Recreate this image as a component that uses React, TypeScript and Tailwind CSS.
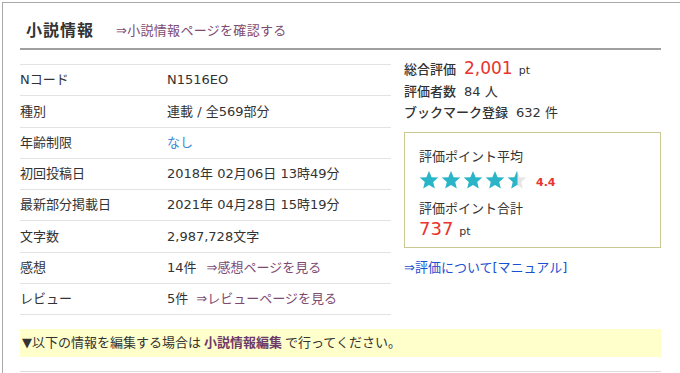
const rows: { label: string; value: React.ReactNode }[] = [
  { label: "Nコード", value: "N1516EO" },
  { label: "種別", value: "連載 / 全569部分" },
  { label: "年齢制限", value: <span className="text-[#3a8ad6]">なし</span> },
  { label: "初回投稿日", value: "2018年 02月06日 13時49分" },
  { label: "最新部分掲載日", value: "2021年 04月28日 15時19分" },
  { label: "文字数", value: "2,987,728文字" },
  {
    label: "感想",
    value: (
      <>
        14件<span className="ml-[10px] text-[#7d4a72]">⇒感想ページを見る</span>
      </>
    ),
  },
  {
    label: "レビュー",
    value: (
      <>
        5件<span className="ml-[8px] text-[#7d4a72]">⇒レビューページを見る</span>
      </>
    ),
  },
];

const StarPath = "M10 1 L12.6 7.2 L19.3 7.6 L14.2 11.9 L15.8 18.5 L10 14.9 L4.2 18.5 L5.8 11.9 L0.7 7.6 L7.4 7.2 Z";

const Star = ({ half = false }: { half?: boolean }) => (
  <svg width="20" height="20" viewBox="0 0 20 20">
    {half ? (
      <>
        <defs>
          <clipPath id="lefthalf">
            <rect x="0" y="0" width="10.5" height="20" />
          </clipPath>
        </defs>
        <path d={StarPath} fill="#e6e6e6" />
        <path d={StarPath} fill="#2ab4c8" clipPath="url(#lefthalf)" />
      </>
    ) : (
      <path d={StarPath} fill="#2ab4c8" />
    )}
  </svg>
);

const App = () => {
  return (
    <div className="h-[373px] w-[680px] overflow-hidden bg-white font-['DejaVu_Sans','Noto_Sans_CJK_JP',sans-serif] text-[13px] text-[#333]">
      <div className="ml-[2px] mt-[2px] h-[400px] border-l border-t border-[#a8a8a8] pl-[17px]">
        <div className="w-[641px]">
          {/* header */}
          <div className="flex h-[47px] items-end border-b-2 border-[#a0a0a0] pb-[7px] pl-[6px]">
            <h2 className="text-[16px] font-bold leading-[20px] tracking-[1px] text-[#333]">小説情報</h2>
            <span className="ml-[22px] text-[13px] leading-[20px] tracking-[0.3px] text-[#7d4a72]">⇒小説情報ページを確認する</span>
          </div>

          <div className="mt-[14px] flex">
            {/* info table */}
            <div className="w-[371px] border-b border-[#e3e3e3]">
              {rows.map((r) => (
                <div key={r.label} className="flex h-[31.25px] items-center border-t border-[#e3e3e3]">
                  <div className="w-[147px]">{r.label}</div>
                  <div>{r.value}</div>
                </div>
              ))}
            </div>

            {/* rating */}
            <div className="ml-[13px] flex-1">
              <div className="-mt-[6px] leading-[21px]">
                <div>
                  <span className="font-medium">総合評価</span>
                  <span className="ml-[8px] text-[17px] text-[#e8332f]">2,001</span>
                  <span className="ml-[6px] text-[11px]">pt</span>
                </div>
                <div>
                  <span className="font-medium">評価者数</span>
                  <span className="ml-[8px]">84 人</span>
                </div>
                <div>
                  <span className="font-medium">ブックマーク登録</span>
                  <span className="ml-[8px]">632 件</span>
                </div>
              </div>

              <div className="mt-[9px] h-[116px] border border-[#c9c991] pl-[14px] pt-[14px]">
                <div className="leading-[20px]">評価ポイント平均</div>
                <div className="mt-[2px] flex items-center">
                  <div className="flex gap-[2px]">
                    <Star />
                    <Star />
                    <Star />
                    <Star />
                    <Star half />
                  </div>
                  <span className="ml-[9px] mt-[6px] text-[11px] font-bold text-[#e8332f]">4.4</span>
                </div>
                <div className="mt-[7px] leading-[20px]">評価ポイント合計</div>
                <div className="leading-[20px]">
                  <span className="text-[18px] text-[#e8332f]">737</span>
                  <span className="ml-[6px] text-[11px]">pt</span>
                </div>
              </div>

              <div className="mt-[10px] text-[#1a50d2]">⇒評価について[マニュアル]</div>
            </div>
          </div>

          {/* notice */}
          <div className="mt-[14px] flex h-[28px] items-center bg-[#ffffcc] pl-[2px]">
            ▼以下の情報を編集する場合は
            <span className="mx-[3px] font-bold text-[#6e3a69]">小説情報編集</span>
            で行ってください。
          </div>
          <div className="mt-[14px] border-b border-[#dcdcdc]" />
        </div>
      </div>
    </div>
  );
};

export default App;
